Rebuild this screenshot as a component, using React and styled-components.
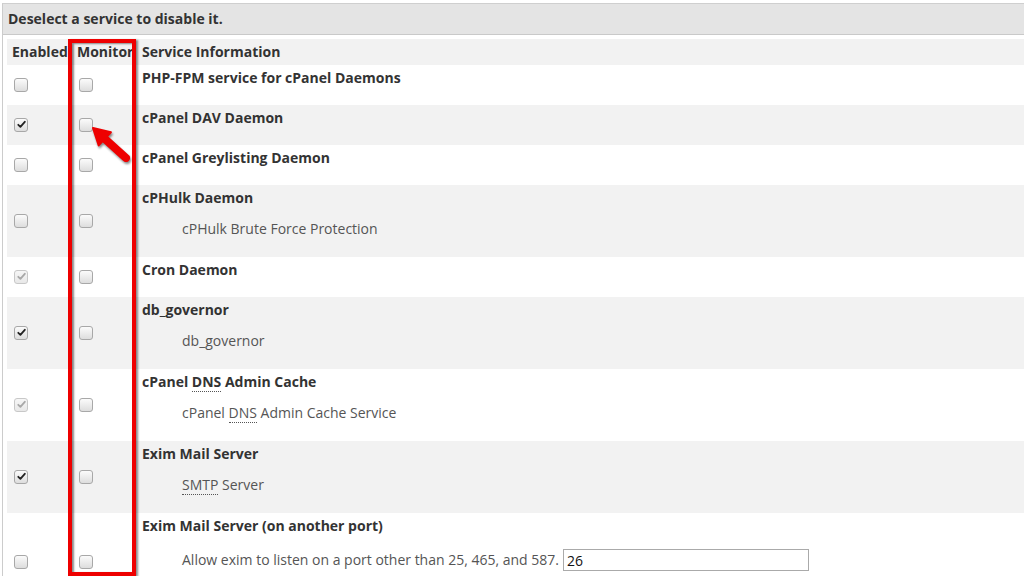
import React from 'react';
import styled, { createGlobalStyle } from 'styled-components';

const GlobalStyle = createGlobalStyle`
  html, body {
    margin: 0;
    padding: 0;
    background: #ffffff;
    overflow: hidden;
  }
  body {
    font-family: 'Open Sans', 'Liberation Sans', sans-serif;
    font-size: 14px;
    color: #333333;
  }
`;

const Page = styled.div`
  position: relative;
  width: 1024px;
  height: 576px;
  overflow: hidden;
  padding: 3px 0 0 2px;
  box-sizing: border-box;
`;

const Panel = styled.div`
  border-left: 1px solid #cccccc;
  border-top: 1px solid #cfcfcf;
  height: 100%;
`;

const PanelHeader = styled.div`
  height: 30px;
  line-height: 30px;
  padding-left: 5px;
  background: #e4e4e4;
  border-bottom: 1px solid #c9c9c9;
  font-weight: bold;
  color: #333333;
`;

const Table = styled.div`
  padding: 4px 0 0 4px;
`;

const Row = styled.div`
  display: grid;
  grid-template-columns: 61px 68px 1fr;
  background: ${(p) => (p.$striped ? '#f2f2f2' : '#ffffff')};
`;

const HeadCell = styled.div`
  height: 26px;
  line-height: 26px;
  font-weight: bold;
  padding-left: ${(p) => p.$pad || 5}px;
  white-space: nowrap;
`;

const BoxCell = styled.div`
  display: flex;
  align-items: center;
  padding-left: ${(p) => p.$pad}px;
  padding-bottom: 1px;
`;

const InfoCell = styled.div`
  padding: 3px 0 17px 6px;
`;

const Title = styled.div`
  font-weight: bold;
  line-height: 20px;
  color: #333333;
`;

const Desc = styled.div`
  margin: 11px 0 1px 40px;
  line-height: 20px;
  color: #555555;
`;

const DescLine = styled.div`
  display: flex;
  align-items: center;
  height: 26px;
  gap: 4px;
`;

const Abbr = styled.abbr`
  text-decoration: none;
  border-bottom: 1px dotted #555555;
`;

const PortInput = styled.input`
  width: 246px;
  height: 22px;
  box-sizing: border-box;
  border: 1px solid #aaaaaa;
  padding: 0 3px;
  font-family: 'Open Sans', 'Liberation Sans', sans-serif;
  font-size: 14px;
  color: #111111;
`;

const Box = styled.span`
  display: inline-flex;
  align-items: center;
  justify-content: center;
  width: 12px;
  height: 12px;
  border: 1px solid ${(p) => (p.$disabled ? '#c8c8c8' : '#a8a8a8')};
  border-radius: 3px;
  background: ${(p) =>
    p.$disabled
      ? 'linear-gradient(#f6f6f6, #e8e8e8)'
      : 'linear-gradient(#fbfbfb, #dddddd)'};
`;

const Highlight = styled.div`
  position: absolute;
  left: 68px;
  top: 39px;
  width: 60px;
  height: 529px;
  border: 4px solid #ee0000;
  box-shadow: 2px 1px 2px rgba(0, 0, 0, 0.45), inset 2px 1px 2px rgba(0, 0, 0, 0.45);
  pointer-events: none;
`;

const Arrow = styled.svg`
  position: absolute;
  left: 88px;
  top: 120px;
  filter: drop-shadow(1px 2px 1px rgba(0, 0, 0, 0.45));
`;

const Check = ({ checked, disabled }) => (
  <Box $disabled={disabled}>
    {checked && (
      <svg width="9" height="9" viewBox="0 0 9 9">
        <path
          d="M1.3 4.8 L3.4 6.9 L7.8 1.8"
          fill="none"
          stroke={disabled ? '#a8a8a8' : '#222222'}
          strokeWidth="1.8"
          strokeLinecap="round"
          strokeLinejoin="round"
        />
      </svg>
    )}
  </Box>
);

const services = [
  { title: 'PHP-FPM service for cPanel Daemons' },
  { title: 'cPanel DAV Daemon', enabled: true },
  { title: 'cPanel Greylisting Daemon' },
  { title: 'cPHulk Daemon', desc: 'cPHulk Brute Force Protection' },
  { title: 'Cron Daemon', enabled: true, locked: true },
  { title: 'db_governor', enabled: true, desc: 'db_governor' },
  {
    title: (
      <>
        cPanel <Abbr>DNS</Abbr> Admin Cache
      </>
    ),
    enabled: true,
    locked: true,
    desc: (
      <>
        cPanel <Abbr>DNS</Abbr> Admin Cache Service
      </>
    ),
  },
  {
    title: 'Exim Mail Server',
    enabled: true,
    desc: (
      <>
        <Abbr>SMTP</Abbr> Server
      </>
    ),
  },
  { title: 'Exim Mail Server (on another port)', port: true },
];

const App = () => (
  <Page>
    <GlobalStyle />
    <Panel>
      <PanelHeader>Deselect a service to disable it.</PanelHeader>
      <Table>
        <Row $striped>
          <HeadCell>Enabled</HeadCell>
          <HeadCell $pad={9}>Monitor</HeadCell>
          <HeadCell $pad={6}>Service Information</HeadCell>
        </Row>
        {services.map((s, i) => (
          <Row key={i} $striped={i % 2 === 1}>
            <BoxCell $pad={7}>
              <Check checked={s.enabled} disabled={s.locked} />
            </BoxCell>
            <BoxCell $pad={11}>
              <Check />
            </BoxCell>
            <InfoCell>
              <Title>{s.title}</Title>
              {s.desc && <Desc>{s.desc}</Desc>}
              {s.port && (
                <Desc>
                  <DescLine>
                    Allow exim to listen on a port other than 25, 465, and 587.
                    <PortInput defaultValue="26" />
                  </DescLine>
                  Useful for users whose ISP blocks outgoing mail on port 25 and other standard ports.
                </Desc>
              )}
            </InfoCell>
          </Row>
        ))}
      </Table>
    </Panel>
    <Highlight />
    <Arrow width="50" height="50" viewBox="0 0 50 50">
      <line x1="17" y1="19" x2="38" y2="38" stroke="#ee0000" strokeWidth="8" strokeLinecap="round" />
      <polygon points="5,8 10.7,25.4 22.9,12.2" fill="#ee0000" stroke="#ee0000" strokeWidth="2" strokeLinejoin="round" />
    </Arrow>
  </Page>
);

export default App;
